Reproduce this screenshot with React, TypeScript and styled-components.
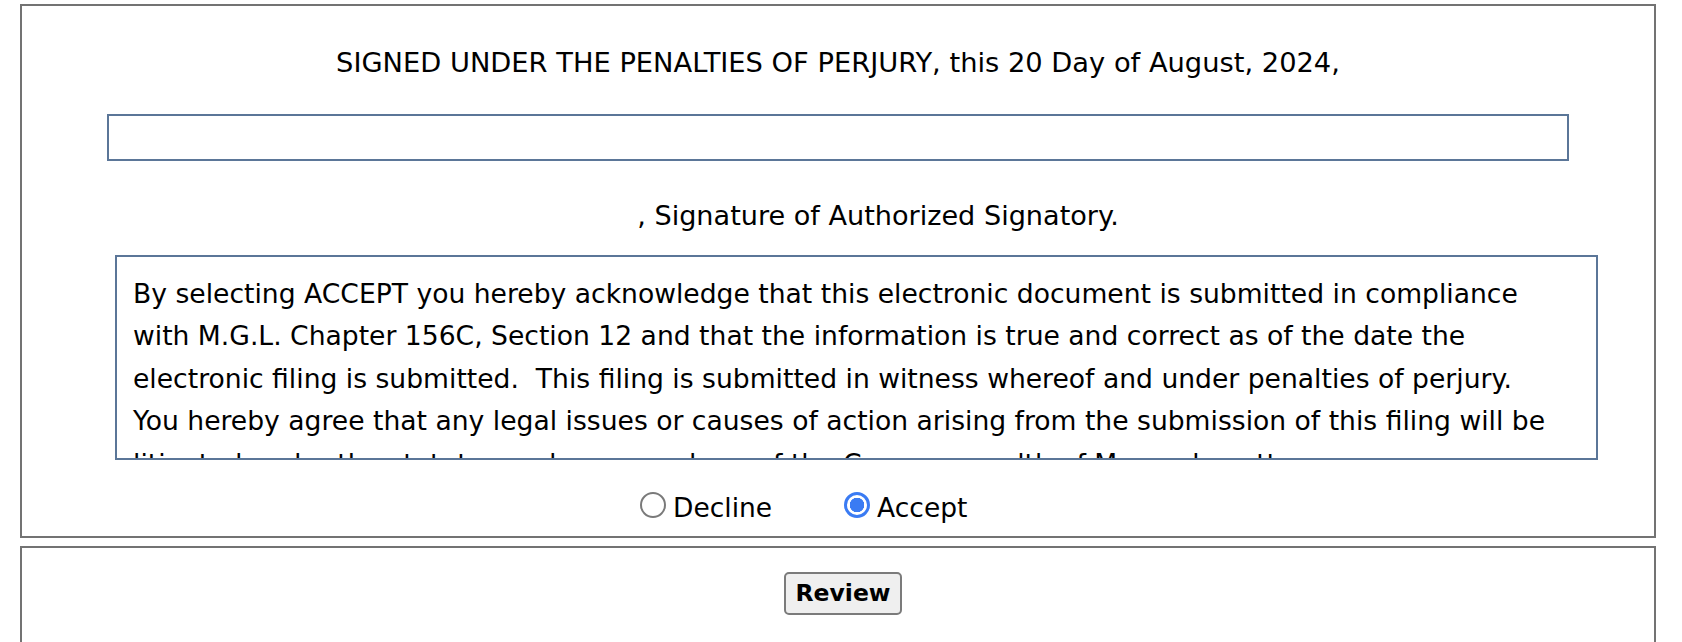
import styled, { createGlobalStyle } from "styled-components";

const GlobalStyle = createGlobalStyle`
  body {
    margin: 0;
    background: #ffffff;
    color: #000000;
    font-family: "DejaVu Sans", Verdana, sans-serif;
  }
`;

const Page = styled.div`
  padding: 4px 26px 0 20px;
`;

const Panel = styled.div<{ $tall?: boolean }>`
  border: 2px solid #737373;
  padding: ${(p) => (p.$tall ? "24px 0 60px" : "41px 0 12px")};
  margin-bottom: 8px;
`;

const Heading = styled.p`
  margin: 0;
  text-align: center;
  font-size: 27.3px;
  line-height: 31.8px;
`;

const SignatureInput = styled.input`
  display: block;
  box-sizing: border-box;
  width: 1462px;
  height: 47px;
  margin: 35px auto 0;
  border: 2px solid #5b7698;
  background: #ffffff;
  font-family: inherit;
  font-size: 26px;
  outline: none;
`;

const SignatureLabel = styled.p`
  margin: 39px 0 0;
  padding-left: 80px;
  text-align: center;
  font-size: 27.1px;
  line-height: 31.8px;
`;

const TermsBox = styled.div`
  box-sizing: border-box;
  width: 1483px;
  height: 205px;
  margin: 23px 0 0 93px;
  padding: 16px 28px 0 16px;
  border: 2px solid #5b7698;
  overflow: hidden;
  font-size: 26.6px;
  line-height: 42.5px;
  white-space: pre-wrap;
`;

const ChoiceRow = styled.div`
  display: flex;
  gap: 72px;
  margin-top: 32px;
  padding-left: 618px;
`;

const Choice = styled.label`
  display: flex;
  align-items: center;
  gap: 7px;
  font-size: 26.5px;
  line-height: 1.2;
`;

const Radio = styled.input`
  appearance: none;
  box-sizing: border-box;
  width: 26px;
  height: 26px;
  margin: 0 0 6px;
  border: 2px solid #7a7a7a;
  border-radius: 50%;
  background: #ffffff;

  &:checked {
    border: 3px solid #3a7bf3;
    background: radial-gradient(circle, #3a7bf3 0 7px, #ffffff 7.5px);
  }
`;

const ButtonRow = styled.div`
  display: flex;
  justify-content: center;
  padding-left: 10px;
`;

const ReviewButton = styled.button`
  box-sizing: border-box;
  width: 118px;
  height: 43px;
  padding: 0;
  border: 2px solid #7b7b7b;
  border-radius: 5px;
  background: #efefef;
  color: #000000;
  font-family: "DejaVu Sans", Verdana, sans-serif;
  font-weight: bold;
  font-size: 23.5px;
`;

const terms =
  "By selecting ACCEPT you hereby acknowledge that this electronic document is submitted in compliance with M.G.L. Chapter 156C, Section 12 and that the information is true and correct as of the date the electronic filing is submitted.  This filing is submitted in witness whereof and under penalties of perjury.\nYou hereby agree that any legal issues or causes of action arising from the submission of this filing will be litigated under the statutes and common laws of the Commonwealth of Massachusetts.";

const App: React.FC = () => {
  return (
    <Page>
      <GlobalStyle />
      <Panel>
        <Heading>
          SIGNED UNDER THE PENALTIES OF PERJURY, this 20 Day of August, 2024,
        </Heading>
        <SignatureInput type="text" />
        <SignatureLabel>, Signature of Authorized Signatory.</SignatureLabel>
        <TermsBox>{terms}</TermsBox>
        <ChoiceRow>
          <Choice>
            <Radio type="radio" name="agree" value="decline" />
            Decline
          </Choice>
          <Choice>
            <Radio type="radio" name="agree" value="accept" defaultChecked />
            Accept
          </Choice>
        </ChoiceRow>
      </Panel>
      <Panel $tall>
        <ButtonRow>
          <ReviewButton type="button">Review</ReviewButton>
        </ButtonRow>
      </Panel>
    </Page>
  );
};

export default App;
